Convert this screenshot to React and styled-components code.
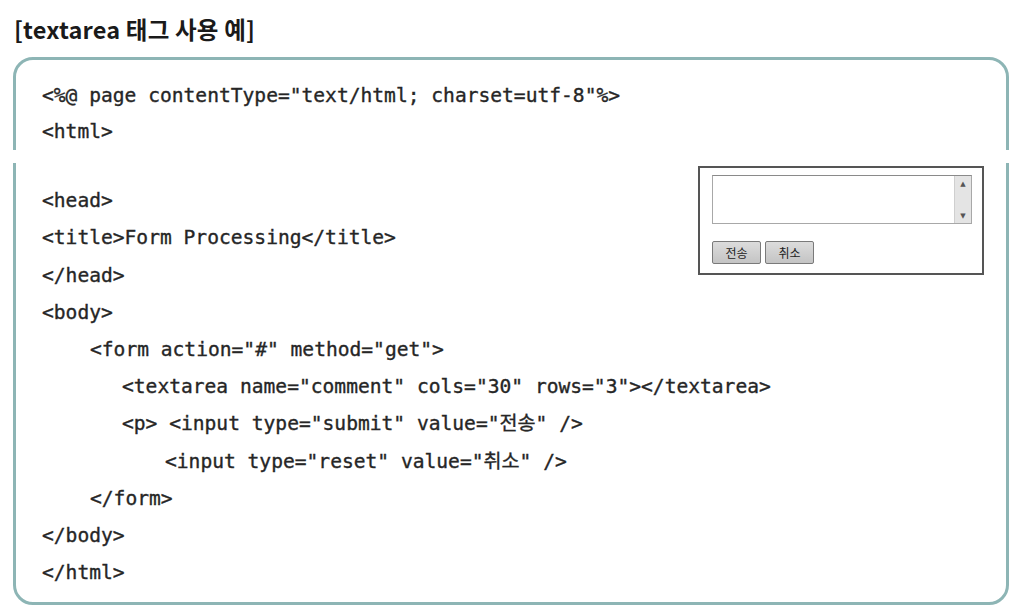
import React from "react";
import styled, { createGlobalStyle } from "styled-components";

const Global = createGlobalStyle`
  html, body { margin: 0; padding: 0; background: #fff; }
  body { width: 1021px; height: 611px; overflow: hidden; }
`;

const Page = styled.div`
  padding: 14px 0 0 13px;
  width: 996px;
`;

const Title = styled.h1`
  margin: 0 0 13px 1px;
  font-family: "Noto Sans CJK KR", "Noto Sans", sans-serif;
  font-weight: 700;
  font-size: 23.5px;
  line-height: 30px;
  color: #1a1a1a;
  letter-spacing: 0.2px;
`;

const CodeBox = styled.div`
  position: relative;
  box-sizing: border-box;
  width: 996px;
  height: 548px;
  border: 3px solid #8db5b5;
  border-radius: 20px;
  padding: 17px 22px 0 26px;
  display: grid;
  grid-template-columns: minmax(0, 1fr) auto;
  align-items: start;

  &::before, &::after {
    content: "";
    position: absolute;
    top: 90px;
    width: 6px;
    height: 13px;
    background: #fff;
  }
  &::before { left: -4px; }
  &::after { right: -4px; }
`;

const Code = styled.div`
  font-family: "DejaVu Sans Mono", "Liberation Mono", "Noto Sans CJK KR", monospace;
  font-size: 19.6px;
  color: #262626;
  -webkit-text-stroke: 0.35px #262626;
  white-space: pre;
  min-width: 0;
`;

const Line = styled.div`
  height: ${(p) => p.$h || 37.2}px;
  line-height: ${(p) => p.$h || 37.2}px;
  padding-left: ${(p) => p.$indent || 0}px;
`;

const Preview = styled.div`
  margin-top: 89px;
  box-sizing: border-box;
  width: 286px;
  height: 109px;
  border: 2px solid #555;
  padding: 7px 10px 0 12px;
  background: #fff;
`;

const TextArea = styled.div`
  box-sizing: border-box;
  width: 260px;
  height: 49px;
  border: 1px solid #a8a8a8;
  border-top-color: #8a8a8a;
  display: flex;
  justify-content: flex-end;
  background: #fff;
`;

const ScrollBar = styled.div`
  width: 16px;
  background: #e4e4e4;
  border-left: 1px solid #cfcfcf;
  display: flex;
  flex-direction: column;
  justify-content: space-between;
  align-items: center;
  padding: 4px 0 3px;
  font-size: 7px;
  line-height: 8px;
  color: #555;
  font-family: "DejaVu Sans", sans-serif;
`;

const Buttons = styled.div`
  display: flex;
  gap: 4px;
  margin-top: 17px;
`;

const Button = styled.div`
  box-sizing: border-box;
  width: 49px;
  height: 23px;
  border: 1px solid #7a7a7a;
  border-radius: 2px;
  background: linear-gradient(#dcdcdc, #c4c4c4);
  display: flex;
  align-items: center;
  justify-content: center;
  font-family: "Noto Sans CJK KR", sans-serif;
  font-size: 12px;
  color: #222;
`;

const lines = [
  { t: '<%@ page contentType="text/html; charset=utf-8"%>' },
  { t: "<html>", h: 35 },
  { t: "", h: 33 },
  { t: "<head>" },
  { t: "<title>Form Processing</title>" },
  { t: "</head>" },
  { t: "<body>" },
  { t: '<form action="#" method="get">', i: 48 },
  { t: '<textarea name="comment" cols="30" rows="3"></textarea>', i: 80 },
  { t: '<p> <input type="submit" value="전송" />', i: 80 },
  { t: '<input type="reset" value="취소" />', i: 123 },
  { t: "</form>", i: 48 },
  { t: "</body>" },
  { t: "</html>" },
];

export default function App() {
  return (
    <Page>
      <Global />
      <Title>[textarea 태그 사용 예]</Title>
      <CodeBox>
        <Code>
          {lines.map((l, k) => (
            <Line key={k} $h={l.h} $indent={l.i}>
              {l.t}
            </Line>
          ))}
        </Code>
        <Preview>
          <TextArea>
            <ScrollBar>
              <span>▲</span>
              <span>▼</span>
            </ScrollBar>
          </TextArea>
          <Buttons>
            <Button>전송</Button>
            <Button>취소</Button>
          </Buttons>
        </Preview>
      </CodeBox>
    </Page>
  );
}
